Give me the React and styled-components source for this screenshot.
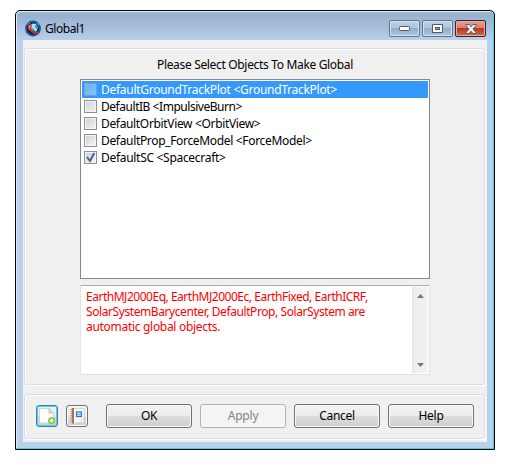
import React from "react";
import styled, { createGlobalStyle, css } from "styled-components";

const Global = createGlobalStyle`
  * { box-sizing: border-box; }
  body { margin: 0; background: #fff; overflow: hidden; }
`;

const Desktop = styled.div`
  width: 515px;
  height: 466px;
  padding: 10px 20px 16px 15px;
  font: 12px "Noto Sans", "Open Sans", sans-serif;
  letter-spacing: -0.3px;
  color: #000;
`;

const Window = styled.div`
  width: 480px;
  height: 440px;
  padding: 0 7px 7px;
  border: 1px solid #000;
  border-radius: 5px 5px 0 0;
  background: linear-gradient(#a0b9d5 0, #97b1ce 4px, #a6bedb 16px, #b9d1ea 30px, #b9d1ea 100%);
  box-shadow: inset -1px -1px #3bd3ea, inset 1px 1px #dcebf7;
`;

const TitleBar = styled.header`
  height: 29px;
  display: flex;
  align-items: flex-start;
  padding: 9px 1px 0 2px;
`;

const Title = styled.div`
  flex: 1;
  padding: 0 0 0 3px;
  line-height: 17px;
  letter-spacing: ${(p) => p.$spacing};
`;

const Controls = styled.div`
  display: flex;
  gap: 2px;
`;

const ControlButton = styled.button`
  width: 31px;
  height: 17px;
  padding: 0;
  display: flex;
  align-items: center;
  justify-content: center;
  border: 1px solid #5f7489;
  border-radius: 2px;
  background: linear-gradient(#bdd0e5 0, #adc4de 50%, #93aecb 50%, #aec6e0 100%);
  box-shadow: inset 0 0 0 1px #d3e2f1;
  ${(p) => p.$close && css`
    border-color: #491b22;
    background: linear-gradient(#e4a294 0, #d5806f 48%, #b8371f 50%, #cf6b4f 100%);
    box-shadow: inset 0 0 0 1px #e5ad9f;
  `}
`;

const Client = styled.main`
  width: 464px;
  height: 402px;
  padding: 8px 1px 1px;
  display: flex;
  flex-direction: column;
  gap: 9px;
  background: #f0f0f0;
`;

const Group = styled.section`
  height: ${(p) => p.$height};
  border: 1px solid #d5dfe5;
  border-radius: 3px;
  box-shadow: inset 1px 1px #fff, 1px 1px #fff;
  width: 461px;
`;

const Selection = styled(Group)`
  padding: 8px 0 0 55px;
`;

const Heading = styled.div`
  width: 350px;
  height: 22px;
  line-height: 16px;
  text-align: center;
  letter-spacing: -0.33px;
`;

const List = styled.div`
  width: 350px;
  height: 200px;
  padding: 1px;
  border: 1px solid #828790;
  background: #fff;
`;

const Row = styled.div`
  height: 17px;
  padding-left: 2px;
  display: flex;
  align-items: center;
  gap: 4px;
  line-height: 17px;
  color: ${(p) => (p.$selected ? "#fff" : "#000")};
  background: ${(p) => (p.$selected ? "#3399ff" : "transparent")};
`;

const RowText = styled.span`
  white-space: nowrap;
  letter-spacing: ${(p) => p.$spacing};
`;

const Check = styled.span`
  width: 13px;
  height: 13px;
  flex: none;
  display: flex;
  border: 1px solid ${(p) => (p.$selected ? "#6ba3d6" : "#8e8f8f")};
  background: ${(p) => p.$selected
    ? "linear-gradient(135deg, #69adf0, #8cc5fa)"
    : "linear-gradient(135deg, #cbcfd5, #f6f6f6)"};
  box-shadow: inset 0 0 0 1px ${(p) => (p.$selected ? "#7ebcf7" : "#f4f4f4")};
`;

const Notes = styled.div`
  width: 350px;
  height: 90px;
  margin-top: 6px;
  padding: 1px 1px 1px 5px;
  display: flex;
  justify-content: space-between;
  border: 1px solid #e2e3ea;
  border-top-color: #abadb3;
  background: #fff;
  color: #f00;
`;

const NotesText = styled.div`
  padding-top: 2px;
  line-height: 15px;
`;

const NotesLine = styled.div`
  white-space: nowrap;
  letter-spacing: ${(p) => p.$spacing};
`;

const ScrollBar = styled.div`
  width: 16px;
  height: 86px;
  padding: 7px 4px 6px 5px;
  display: flex;
  flex-direction: column;
  justify-content: space-between;
  background: linear-gradient(90deg, #e3e3e3, #eeeeee 2px, #f0f0f0 14px, #f7f7f7);
`;

const Actions = styled(Group)`
  padding: 9px 0 0 11px;
  display: flex;
`;

const IconButton = styled.button`
  width: 22px;
  height: 22px;
  margin: 1px 8px 0 0;
  padding: 0;
  display: flex;
  align-items: center;
  justify-content: center;
  border: 1px solid ${(p) => (p.$focused ? "#3c7fb1" : "#707070")};
  border-radius: 3px;
  background: linear-gradient(#f2f2f2, #ebebeb 50%, #dddddd 50%, #cfcfcf);
  box-shadow: inset 0 0 0 1px ${(p) => (p.$focused ? "#48d0f5" : "#fafafa")};
`;

const Buttons = styled.div`
  display: flex;
  gap: 8px;
  margin-left: 10px;
`;

const Button = styled.button`
  width: 86px;
  height: 24px;
  padding: 0 0 1px;
  font: inherit;
  letter-spacing: ${(p) => p.$spacing};
  color: #000;
  border: 1px solid #707070;
  border-radius: 3px;
  background: linear-gradient(#f2f2f2, #ebebeb 50%, #dddddd 50%, #cfcfcf);
  box-shadow: inset 0 0 0 1px #fafafa;
  &:disabled {
    color: #838383;
    border-color: #adb2b5;
    background: #f4f4f4;
  }
`;

const AppIcon = () => (
  <svg width="17" height="17" viewBox="0 0 17 17">
    <circle cx="8" cy="8.5" r="7" fill="#15202e" stroke="#1d4fa5" strokeWidth="1.8" />
    <path d="M5 5q3-3 6.500-1l2 4-3 4-5-2z" fill="#2fa3b9" />
    <path d="M7 4l4 0-2 5-3-1z" fill="#b5e0e4" />
    <path d="M3 6l3-2 1 3-2 4-2-2z" fill="#e2482d" />
    <path d="M3 4.500l2-1.500M12 3l2 2.500" stroke="#8fb2dd" />
    <path d="M5 9q4 6 8.500 3" stroke="#dd2f45" strokeWidth="1.6" fill="none" />
    <path d="M9.500 8l2 3" stroke="#ddf4f4" strokeWidth="1.8" />
    <path d="M4 6l1 1" stroke="#f2b14b" strokeWidth="1.2" />
  </svg>
);

const NewIcon = () => (
  <svg width="20" height="20" viewBox="0 0 20 20">
    <path d="M2.500 2.500h9.500l4.500 5v9.500h-14z" fill="#fff" stroke="#d5d2d0" />
    <path d="M12 2.500v4.500h4z" fill="#e8e6e5" stroke="#bbb5b3" strokeWidth=".8" />
    <circle cx="14.600" cy="14.600" r="3.500" fill="#85c22c" />
    <path d="M12.500 14.600h4.200M14.600 12.500v4.200" stroke="#fff" strokeWidth="1.5" />
  </svg>
);

const NotebookIcon = () => (
  <svg width="20" height="20" viewBox="0 0 20 20">
    <path d="M4.500 2.500h13v10l-4 4.500h-9z" fill="#fbfaf9" stroke="#d6d3d1" />
    <path d="M17.500 11.500l-5.500 6h5.500z" fill="#efedec" stroke="#c8c2bd" strokeWidth=".7" />
    <path d="M6 2v15.500" stroke="#b96a43" strokeWidth="2" />
    <path d="M3.500 3.500h2M3.500 5.500h2M3.500 7.500h2M3.500 9.500h2M3.500 11.500h2M3.500 13.500h2M3.500 15.500h2" stroke="#9a8f88" strokeWidth=".8" />
    <rect x="9.500" y="6" width="5" height="4.500" fill="#e8f1fd" stroke="#1f72dc" strokeWidth="1.200" />
    <path d="M9.500 8.500h5" stroke="#5a97e6" />
  </svg>
);

const rows = [
  ["DefaultGroundTrackPlot <GroundTrackPlot>", "-0.28px"],
  ["DefaultIB <ImpulsiveBurn>", "-0.46px"],
  ["DefaultOrbitView <OrbitView>", "-0.34px"],
  ["DefaultProp_ForceModel <ForceModel>", "-0.33px"],
  ["DefaultSC <Spacecraft>", "-0.3px"],
];

export default function App() {
  return (
    <Desktop>
      <Global />
      <Window>
        <TitleBar>
          <AppIcon />
          <Title $spacing="-0.45px">Global1</Title>
          <Controls>
            <ControlButton>
              <svg width="11" height="5"><rect x=".5" y=".5" width="10" height="4" rx="1" fill="#fff" stroke="#535666" /></svg>
            </ControlButton>
            <ControlButton>
              <svg width="11" height="9"><path d="M.5.500h10v8H.500z" fill="#fff" stroke="#535666" /><rect x="3.500" y="3.500" width="4" height="2" fill="#8aa7c8" stroke="#535666" /></svg>
            </ControlButton>
            <ControlButton $close>
              <svg width="12" height="10"><path d="M1 .5h3L6 2.800 8 .5h3v1L8 5l3 3.500v1H8L6 7.200 4 9.500H1v-1L4 5 1 1.500z" fill="#f5f5f5" stroke="#535666" /></svg>
            </ControlButton>
          </Controls>
        </TitleBar>
        <Client>
          <Selection $height="337px">
            <Heading>Please Select Objects To Make Global</Heading>
            <List>
              {rows.map(([label, spacing], i) => (
                <Row key={label} $selected={i === 0}>
                  <Check $selected={i === 0}>
                    {i === 4 && <svg width="11" height="11"><path d="M2 5l3 4L9.300 1" fill="none" stroke="#4a5f9f" strokeWidth="2" /></svg>}
                  </Check>
                  <RowText $spacing={spacing}>{label}</RowText>
                </Row>
              ))}
            </List>
            <Notes>
              <NotesText>
                <NotesLine $spacing="-0.48px">EarthMJ2000Eq, EarthMJ2000Ec, EarthFixed, EarthICRF,</NotesLine>
                <NotesLine $spacing="-0.42px">SolarSystemBarycenter, DefaultProp, SolarSystem are</NotesLine>
                <NotesLine $spacing="-0.3px">automatic global objects.</NotesLine>
              </NotesText>
              <ScrollBar>
                <svg width="7" height="4"><path d="M0 4L3.500 0 7 4z" fill="#777" /></svg>
                <svg width="7" height="4"><path d="M0 0h7L3.500 4z" fill="#777" /></svg>
              </ScrollBar>
            </Notes>
          </Selection>
          <Actions $height="45px">
            <IconButton $focused><NewIcon /></IconButton>
            <IconButton><NotebookIcon /></IconButton>
            <Buttons>
              <Button $spacing="-0.3px">OK</Button>
              <Button $spacing="-0.2px" disabled>Apply</Button>
              <Button $spacing="-0.3px">Cancel</Button>
              <Button $spacing="-0.3px">Help</Button>
            </Buttons>
          </Actions>
        </Client>
      </Window>
    </Desktop>
  );
}
